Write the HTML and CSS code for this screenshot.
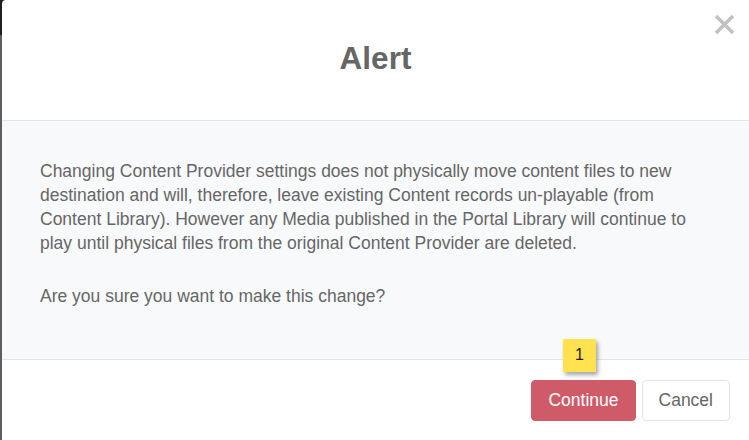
FILE: index.html
```html
<!DOCTYPE html>
<html lang="en">
<head>
<meta charset="utf-8">
<title>Alert</title>
<link rel="stylesheet" href="styles.css">
</head>
<body>
<div class="strip"></div>
<div class="modal">
  <div class="modal-header">
    <h1 class="modal-title">Alert</h1>
    <button class="close" aria-label="Close">
      <svg width="21" height="21" viewBox="0 0 21 21"><path d="M2 2 L19 19 M19 2 L2 19" stroke="#c2c2c2" stroke-width="3.6" stroke-linecap="butt" fill="none"/></svg>
    </button>
  </div>
  <div class="modal-body">
    <p class="msg">Changing Content Provider settings does not physically move content files to new destination and will, therefore, leave existing Content records un-playable (from Content Library). However any Media published in the Portal Library will continue to play until physical files from the original Content Provider are deleted.</p>
    <p class="msg last">Are you sure you want to make this change?</p>
  </div>
  <div class="modal-footer">
    <button class="btn btn-danger">Continue</button>
    <button class="btn btn-default">Cancel</button>
  </div>
  <div class="badge">1</div>
</div>
</body>
</html>
```
FILE: styles.css
```css
html, body {
  margin: 0;
  padding: 0;
  width: 749px;
  height: 440px;
  overflow: hidden;
}
body {
  display: flex;
  background: linear-gradient(#1f1f1f 0, #1f1f1f 35px, #5e5e5e 35px);
  font-family: "Liberation Sans", Arial, sans-serif;
  color: #666;
}
.strip {
  width: 2px;
  flex: none;
}
.modal {
  position: relative;
  flex: 1;
  height: 440px;
  background: #fff;
  border-top-left-radius: 4px;
}
.modal-header {
  height: 80px;
  padding: 40px 0 0;
  border-bottom: 1px solid #e5e5e5;
  text-align: center;
}
.modal-title {
  margin: 0;
  font-size: 31.5px;
  line-height: 36px;
  font-weight: bold;
  color: #666;
}
.close {
  position: absolute;
  top: 14px;
  right: 14px;
  width: 21px;
  height: 21px;
  padding: 0;
  border: 0;
  background: none;
}
.close svg { display: block; }
.modal-body {
  background: #f8f9fb;
  padding: 38px 0 51px 38px;
}
.msg {
  margin: 0 0 29px;
  width: 662px;
  font-size: 17.5px;
  line-height: 24px;
  color: #666;
}
.msg.last { margin-bottom: 0; }
.modal-footer {
  border-top: 1px solid #e5e5e5;
  padding: 20px 19px 0 0;
  display: flex;
  justify-content: flex-end;
  gap: 6px;
}
.btn {
  font-family: "Liberation Sans", Arial, sans-serif;
  font-size: 17.5px;
  line-height: 23px;
  padding: 8px 16px;
  border-radius: 4px;
  border: 1px solid transparent;
  cursor: pointer;
}
.btn-danger {
  background: #cf5a68;
  border-color: #cf5a68;
  color: #fff;
}
.btn-default {
  background: #fff;
  border-color: #e2e2e2;
  color: #666;
}
.badge {
  position: absolute;
  left: 561px;
  top: 339px;
  width: 33px;
  height: 33px;
  background: #ffe24e;
  box-shadow: 2px 3px 4px rgba(0, 0, 0, 0.35);
  display: flex;
  align-items: center;
  justify-content: center;
  font-size: 16px;
  line-height: 18px;
  color: #1a1a1a;
  padding-bottom: 2px;
  box-sizing: border-box;
}
```
